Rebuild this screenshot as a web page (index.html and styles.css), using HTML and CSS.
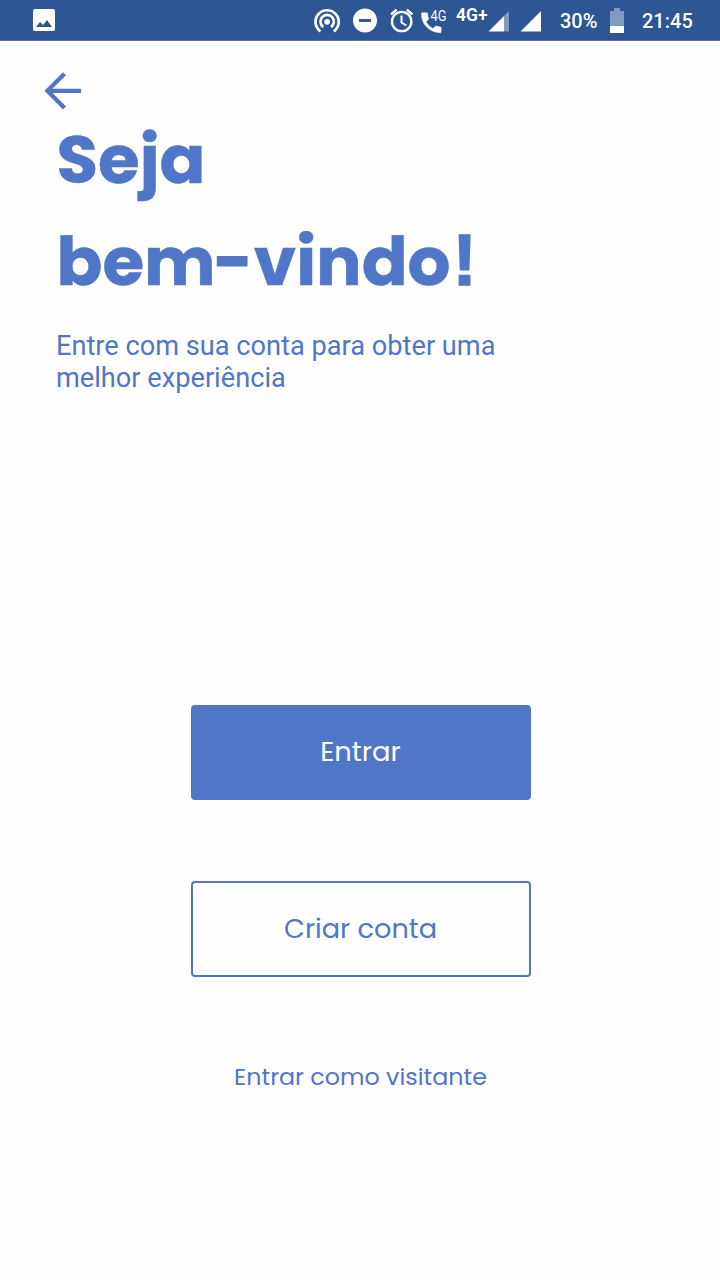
FILE: index.html
```html
<!DOCTYPE html>
<html lang="pt-BR">
<head>
<meta charset="utf-8">
<title>Seja bem-vindo!</title>
<link rel="stylesheet" href="styles.css">
</head>
<body>
<header class="status">
  <svg class="photo" width="22" height="22" viewBox="0 0 22 22"><rect width="22" height="22" rx="2" fill="#fff"/><path d="M3 18l4-5 3 3 4-5 5 7z" fill="#2e5594"/></svg>
  <svg class="signals" width="252" height="40" viewBox="308 0 252 40" fill="none" stroke="#fff">
    <g stroke-width="2.7">
      <path d="M320.4 31.3a11.6 11.6 0 1 1 13.4 0"/>
      <path d="M323.3 27.1a6.7 6.7 0 1 1 7.7 0"/>
    </g>
    <circle cx="327.1" cy="21.8" r="2.9" fill="#fff" stroke="none"/>
    <circle cx="365" cy="20.5" r="12" fill="#fff" stroke="none"/>
    <path d="M359 20.5h12" stroke="#2e5594" stroke-width="2.9"/>
    <g stroke-width="2.3">
      <circle cx="401.7" cy="21.5" r="9.7"/>
      <path d="M391 14.3l5.6-4.7M412.4 14.3l-5.6-4.7"/>
      <path d="M401.5 15.5v7l4.8 3" stroke-width="2"/>
    </g>
    <path d="M422.3 12.7h4.500q.8 0 .9.900.1 2.400.9 4.700.2.700-.3 1.200l-2.300 2.400q2.700 4.500 7 6.700l2.300-2.300q.5-.5 1.200-.3 2 .8 3.800.9.900.1.900.9v4q0 .9-.9.900-8.800-.3-14.100-6.200-4.900-5.200-4.800-13 0-.8.900-.8z" fill="#fff" stroke="#fff" stroke-width=".4"/>
    <path d="M488.5 31.5L504 16v15.500z" fill="#fff" stroke="none"/>
    <path d="M504 16l5-5v20.500h-5z" fill="#8299c1" stroke="none"/>
    <path d="M520.5 31.5L541 11v20.500z" fill="#fff" stroke="none"/>
    <text class="net thin" x="430.5" y="20.5" textLength="16" lengthAdjust="spacingAndGlyphs">4G</text>
    <text class="net" x="456" y="20.8" textLength="31.5" lengthAdjust="spacingAndGlyphs">4G+</text>
  </svg>
  <span class="percent">30%</span>
  <svg class="battery" width="14" height="25" viewBox="0 0 14 25"><path d="M0 3h4V0h6v3h4v15H0z" fill="#8299c1"/><path d="M0 18h14v7H0z" fill="#fff"/></svg>
  <span class="clock">21:45</span>
</header>
<main class="screen">
  <svg class="back" width="40" height="40" viewBox="0 0 40 40" fill="none" stroke="#5076c8" stroke-width="4.3"><path d="M38 19.800H5M21.500 2.700L4.400 19.800 21.500 36.900"/></svg>
  <h1 class="title">Seja<br>bem<span class="dash">-</span>vindo<span class="mark">!</span></h1>
  <p class="intro">Entre com sua conta para obter uma<br>melhor experiência</p>
  <div class="actions">
    <button class="button filled">Entrar</button>
    <button class="button outlined">Criar conta</button>
    <a class="guest">Entrar como visitante</a>
  </div>
</main>
</body>
</html>
```
FILE: styles.css
```css
* { box-sizing: border-box; }
body { margin: 0; width: 720px; height: 1280px; background: #fefefe; color: #5076c8; overflow: hidden; font-family: Roboto, sans-serif; }
svg { display: block; flex: none; }
.status { height: 41px; display: flex; align-items: flex-start; background: #2e5594; border-bottom: 1px solid #58749f; color: #fff; font-size: 20px; font-weight: 500; line-height: 40px; white-space: nowrap; }
.photo { margin: 9px 0 0 33px; }
.signals { margin-left: 253px; }
.net { font: 600 17.5px Roboto, sans-serif; fill: #fff; stroke: none; }
.thin { font-size: 15px; font-weight: 400; }
.percent { width: 50px; padding-top: 1px; }
.battery { margin-top: 8px; }
.clock { margin-left: 18px; padding-top: 1px; }
.screen { padding-top: 30px; }
.back { margin-left: 43px; }
.title { margin: -2px 0 0 56.5px; height: 206px; font: 700 67.6px/102px Poppins, Inter, sans-serif; -webkit-text-stroke: .5px #5076c8; white-space: nowrap; }
.dash { margin: 0 1px 0 -2px; -webkit-text-stroke-width: 1px; }
.mark { margin-left: 2px; font: 700 73px/1 "Liberation Sans", sans-serif; line-height: 0; -webkit-text-stroke-width: 1.5px; }
.intro { margin: 15px 0 0 56px; font-size: 27.2px; line-height: 32px; }
.actions { margin-top: 311px; padding-left: 1px; display: flex; flex-direction: column; align-items: center; font-family: Poppins, Inter, sans-serif; }
.button { width: 340px; height: 95px; padding: 0 0 1px; border: 2px solid #5076c8; border-radius: 4px; font-family: inherit; font-size: 27.4px; line-height: 32px; }
.filled { background: #5076c8; color: #fff; }
.outlined { height: 96px; padding: 0; margin-top: 81px; background: transparent; color: #5076c8; font-size: 27.2px; }
.guest { margin-top: 84px; font-size: 23.8px; line-height: 32px; }
```
